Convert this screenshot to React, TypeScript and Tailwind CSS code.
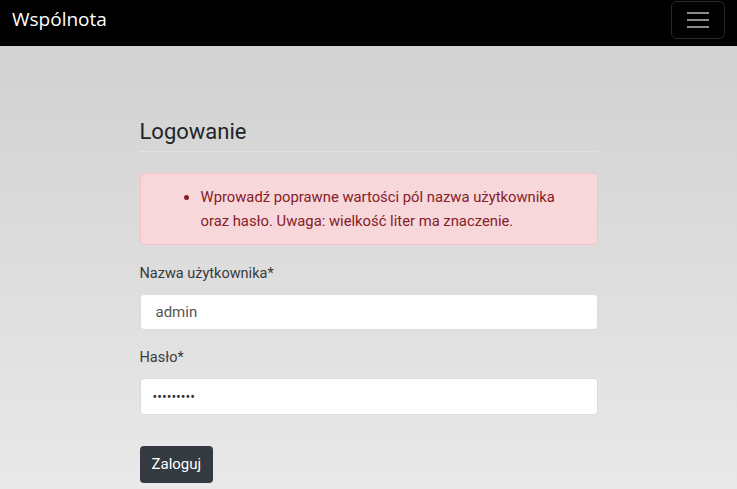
export default function App() {
  return (
    <div className="min-h-[489px] bg-gradient-to-b from-[#cfcfcf] to-[#e9e9e9] font-['Roboto',sans-serif]">
      <nav className="h-[46px] bg-black flex items-center justify-between pl-[12px] pr-[12px]">
        <span className="text-white text-[19px] font-['Open_Sans',sans-serif] leading-none -mt-[8px]">Wspólnota</span>
        <button className="w-[54px] h-[38px] -mt-[7px] border border-[#2a2a2a] rounded-[6px] flex items-center justify-center">
          <svg width="24" height="20" viewBox="0 0 24 20">
            <path d="M1 3h22M1 10h22M1 17h22" stroke="#8c8c8c" strokeWidth="2" />
          </svg>
        </button>
      </nav>
      <main className="w-[458px] mx-auto pt-[72px] pb-[7px]">
        <h1 className="text-[22px] text-[#212529] font-normal leading-[28px] pb-[5px] border-b border-[#e2e2e2]">Logowanie</h1>
        <div className="mt-[21px] h-[72px] bg-[#f8d7da] border border-[#f5c2c7] rounded-[4px] flex items-center">
          <ul className="list-disc pl-[59px] pr-[30px] text-[#842029] text-[14.8px] leading-[24px] marker:text-[#842029]">
            <li className="pl-[1px]">Wprowadź poprawne wartości pól nazwa użytkownika oraz hasło. Uwaga: wielkość liter ma znaczenie.</li>
          </ul>
        </div>
        <label className="block mt-[19px] text-[14.5px] text-[#3a3a3a] leading-[20px]">Nazwa użytkownika*</label>
        <input
          className="block mt-[10px] w-full h-[36px] bg-white border border-[#dcdcdc] rounded-[4px] pl-[15px] text-[15px] text-[#555] outline-none"
          defaultValue="admin"
        />
        <label className="block mt-[18px] text-[14.5px] text-[#3a3a3a] leading-[20px]">Hasło*</label>
        <input
          type="password"
          className="block mt-[10px] w-full h-[37px] bg-white border border-[#dcdcdc] rounded-[4px] pl-[12px] text-[14px] text-[#333] outline-none"
          defaultValue="admin1234"
        />
        <button className="mt-[31px] h-[37px] px-[12px] bg-[#343a40] text-white text-[15px] rounded-[4px]">Zaloguj</button>
      </main>
    </div>
  );
}
